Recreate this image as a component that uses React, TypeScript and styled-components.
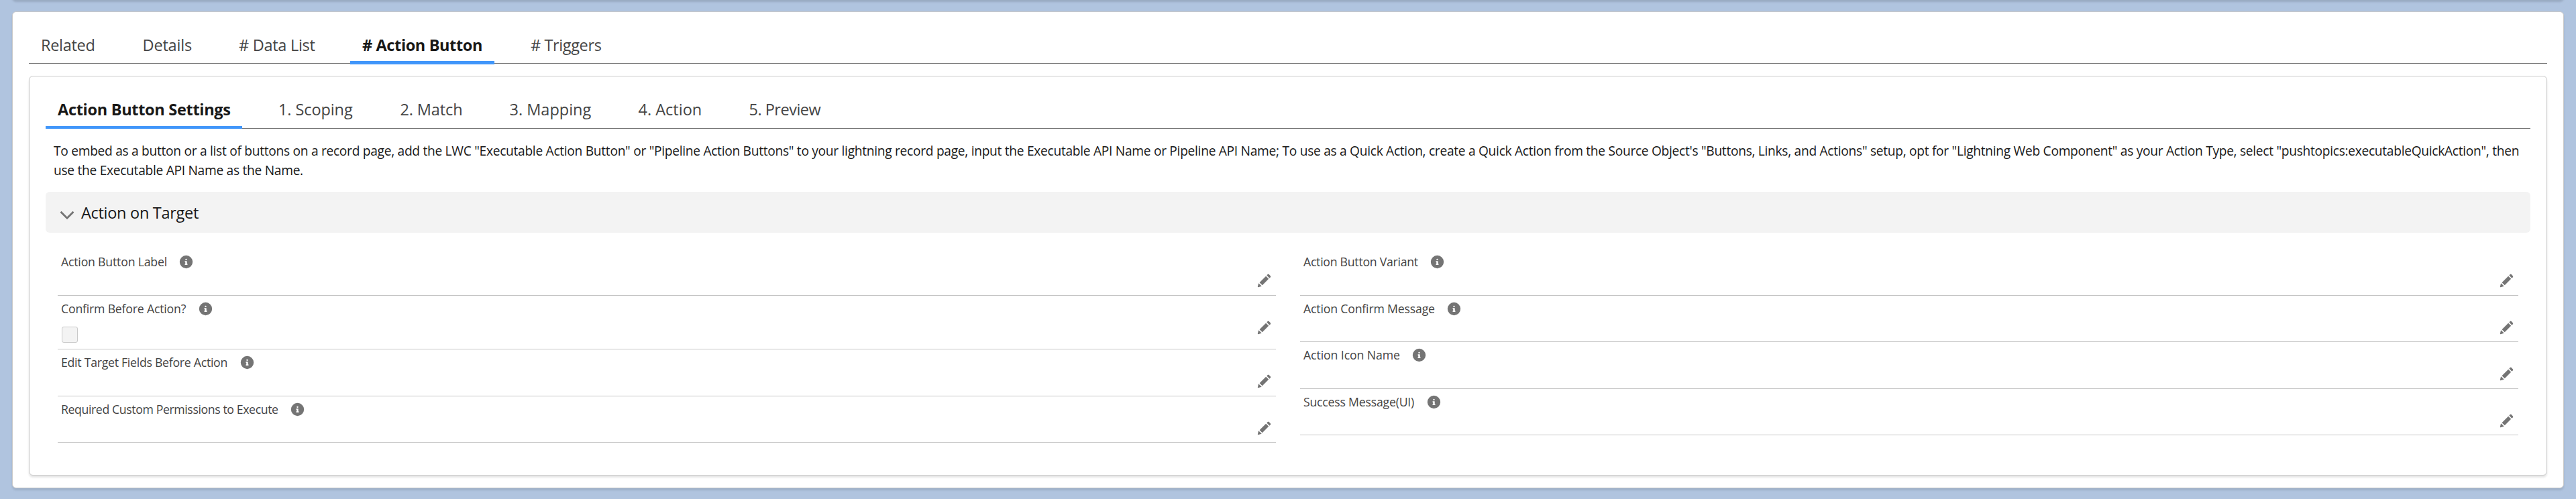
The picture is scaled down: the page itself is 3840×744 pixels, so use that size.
import React from 'react';
import styled, { createGlobalStyle, css } from 'styled-components';

const GlobalStyle = createGlobalStyle`
  *, *::before, *::after { box-sizing: border-box; }
  html, body { margin: 0; padding: 0; }
  body {
    background: #b0c4df;
    color: #181818;
    font-family: 'Segoe UI', 'Open Sans', sans-serif;
    overflow: hidden;
  }
`;

const Page = styled.div`
  height: 744px;
  overflow: hidden;
  display: flex;
  flex-direction: column;
  padding: 0 18px;
`;

const PanelAbove = styled.div`
  flex: none;
  height: 6px;
  margin-top: -6px;
  border-radius: 0 0 6px 6px;
  box-shadow: 0 3px 3px rgba(0, 0, 0, 0.13);
`;

const panel = css`
  background: #fff;
  border: 1px solid #c9c9c9;
  border-radius: 6px;
  box-shadow: 0 3px 3px rgba(0, 0, 0, 0.1);
  padding: 22px 24px 0;
`;

const RecordCard = styled.main`
  ${panel}
  flex: none;
  height: 711px;
  margin-top: 17px;
`;

const SettingsCard = styled.section`
  ${panel}
  height: 596px;
  margin-top: 18px;
`;

const TabBar = styled.nav<{ $height: number }>`
  display: flex;
  gap: 36px;
  height: ${(p) => p.$height}px;
  border-bottom: 1px solid #747474;
`;

const Tab = styled.a<{ $width: number; $tracking: number; $active?: boolean; $bar: number }>`
  position: relative;
  flex: none;
  width: ${(p) => p.$width}px;
  padding-left: 18px;
  font-size: 23.5px;
  line-height: 54px;
  letter-spacing: ${(p) => p.$tracking}px;
  white-space: nowrap;
  color: #444;
  ${(p) =>
    p.$active &&
    css`
      color: #181818;
      font-weight: 700;
      &::after {
        content: '';
        position: absolute;
        left: 0;
        right: 0;
        bottom: ${p.$bar === 5 ? -2 : -1}px;
        height: ${p.$bar}px;
        background: #4096fa;
      }
    `}
`;

const HelpText = styled.p`
  margin: 18px 12px 0;
  font-size: 19.2px;
  line-height: 29px;
  letter-spacing: -0.299px;
  white-space: nowrap;
`;

const SectionHeader = styled.h3`
  display: flex;
  align-items: center;
  gap: 9px;
  height: 61px;
  margin: 18px 0 0;
  padding-left: 20px;
  border-radius: 6px;
  background: #f3f3f3;
  font-size: 23.5px;
  font-weight: 400;
  letter-spacing: -0.29px;
  svg { margin-top: 8px; }
`;

const Columns = styled.div`
  display: grid;
  grid-template-columns: 1fr 1fr;
  column-gap: 36px;
  margin-top: 24px;
  padding: 0 18px;
`;

const Column = styled.div`
  display: flex;
  flex-direction: column;
`;

const Field = styled.div<{ $height: number }>`
  display: flex;
  justify-content: space-between;
  align-items: flex-start;
  height: ${(p) => p.$height}px;
  padding: 7px 7px 0 5px;
  border-bottom: 1px solid #c4c4c4;
`;

const FieldLabel = styled.div<{ $tracking: number }>`
  display: flex;
  align-items: center;
  gap: 18.5px;
  height: 24px;
  font-size: 17.7px;
  letter-spacing: ${(p) => p.$tracking}px;
  color: #444;
  white-space: nowrap;
  svg { margin-top: 1px; }
`;

const CheckBox = styled.div`
  width: 24px;
  height: 24px;
  margin: 15px 0 0 1px;
  border: 1px solid #c9c9c9;
  border-radius: 3px;
  background: #f3f3f3;
`;

const EditButton = styled.button`
  display: flex;
  margin: 30px 0 0;
  padding: 0;
  border: 0;
  background: none;
`;

const Glyph = styled.svg<{ $size: number }>`
  display: block;
  flex: none;
  width: ${(p) => p.$size}px;
  height: ${(p) => p.$size}px;
  fill: #747474;
`;

const InfoIcon = () => (
  <Glyph $size={21} viewBox="0 0 52 52">
    <path d="M26 2a24 24 0 100 48 24 24 0 000-48zm0 12a3 3 0 110 6 3 3 0 010-6zm5 22c0 .5-.4 1-1 1h-8c-.5 0-1-.4-1-1v-2c0-.5.4-1 1-1s1-.4 1-1v-4c0-.5-.4-1-1-1s-1-.4-1-1v-2c0-.5.4-1 1-1h6c.5 0 1 .5 1 1v8c0 .5.4 1 1 1s1 .5 1 1z" />
  </Glyph>
);

const PencilIcon = () => (
  <Glyph $size={21} viewBox="0 0 52 52">
    <path d="M9.5 33.4l8.9 8.9c.4.4 1 .4 1.4 0L42 20c.4-.4.4-1 0-1.4l-8.8-8.8c-.4-.4-1-.4-1.4 0L9.5 32.1c-.4.4-.4 1 0 1.3zM36.1 5.7c-.4.4-.4 1 0 1.4l8.8 8.8c.4.4 1 .4 1.4 0l2.5-2.5c1.6-1.5 1.6-3.9 0-5.5l-4.7-4.7c-1.6-1.6-4.1-1.6-5.7 0zM2.1 48.2c-.2 1 .7 1.9 1.7 1.7l10.9-2.6c.4-.1.7-.3.9-.5l.2-.2c.2-.2.3-.9-.1-1.3l-9-9c-.4-.4-1.1-.3-1.3-.1l-.2.2c-.3.3-.4.6-.5.9z" />
  </Glyph>
);

const ChevronIcon = () => (
  <Glyph $size={24} viewBox="0 0 52 52">
    <path d="M47.6 17.8L27.1 38.5c-.6.6-1.5.6-2.1 0L4.4 17.8c-.6-.6-.6-1.6 0-2.2l2.2-2.2c.6-.6 1.6-.6 2.2 0l16.1 16.3c.6.6 1.6.6 2.2 0l16.1-16.2c.6-.6 1.6-.6 2.2 0l2.2 2.2c.5.7.5 1.6 0 2.1z" />
  </Glyph>
);

interface TabItem { label: string; width: number; tracking: number; active?: boolean }
interface FieldItem { label: string; height: number; tracking: number; checkbox?: boolean }

const recordTabs: TabItem[] = [
  { label: 'Related', width: 115.5, tracking: -0.31 },
  { label: 'Details', width: 107.5, tracking: -0.17 },
  { label: '# Data List', width: 148, tracking: -0.29 },
  { label: '# Action Button', width: 215, tracking: -0.38, active: true },
  { label: '# Triggers', width: 142, tracking: -0.38 },
];

const settingsTabs: TabItem[] = [
  { label: 'Action Button Settings', width: 293, tracking: -0.3, active: true },
  { label: '1. Scoping', width: 145.5, tracking: -0.09 },
  { label: '2. Match', width: 127, tracking: -0.12 },
  { label: '3. Mapping', width: 156, tracking: 0 },
  { label: '4. Action', width: 129, tracking: 0 },
  { label: '5. Preview', width: 142, tracking: -0.5 },
];

const leftFields: FieldItem[] = [
  { label: 'Action Button Label', height: 70, tracking: -0.2 },
  { label: 'Confirm Before Action?', height: 80, tracking: -0.2, checkbox: true },
  { label: 'Edit Target Fields Before Action', height: 70, tracking: -0.27 },
  { label: 'Required Custom Permissions to Execute', height: 69, tracking: -0.39 },
];

const rightFields: FieldItem[] = [
  { label: 'Action Button Variant', height: 70, tracking: -0.27 },
  { label: 'Action Confirm Message', height: 69, tracking: -0.18 },
  { label: 'Action Icon Name', height: 70, tracking: -0.1 },
  { label: 'Success Message(UI)', height: 69, tracking: -0.22 },
];

const Tabs = ({ items, height, bar }: { items: TabItem[]; height: number; bar: number }) => (
  <TabBar $height={height}>
    {items.map((t) => (
      <Tab key={t.label} $width={t.width} $tracking={t.tracking} $active={t.active} $bar={bar}>
        {t.label}
      </Tab>
    ))}
  </TabBar>
);

const FieldColumn = ({ fields }: { fields: FieldItem[] }) => (
  <Column>
    {fields.map((f) => (
      <Field key={f.label} $height={f.height}>
        <div>
          <FieldLabel $tracking={f.tracking}>
            <span>{f.label}</span>
            <InfoIcon />
          </FieldLabel>
          {f.checkbox && <CheckBox />}
        </div>
        <EditButton aria-label={`Edit ${f.label}`}>
          <PencilIcon />
        </EditButton>
      </Field>
    ))}
  </Column>
);

export default function App() {
  return (
    <>
      <GlobalStyle />
      <Page>
        <PanelAbove />
        <RecordCard>
          <Tabs items={recordTabs} height={55} bar={5} />
          <SettingsCard>
            <Tabs items={settingsTabs} height={56} bar={4} />
            <HelpText>
              To embed as a button or a list of buttons on a record page, add the LWC "Executable Action Button" or
              "Pipeline Action Buttons" to your lightning record page, input the Executable API Name or Pipeline API
              Name; To use as a Quick Action, create a Quick Action from the Source Object's "Buttons, Links, and
              Actions" setup, opt for "Lightning Web Component" as your Action Type, select
              "pushtopics:executableQuickAction", then
              <br />
              use the Executable API Name as the Name.
            </HelpText>
            <SectionHeader>
              <ChevronIcon />
              Action on Target
            </SectionHeader>
            <Columns>
              <FieldColumn fields={leftFields} />
              <FieldColumn fields={rightFields} />
            </Columns>
          </SettingsCard>
        </RecordCard>
      </Page>
    </>
  );
}
